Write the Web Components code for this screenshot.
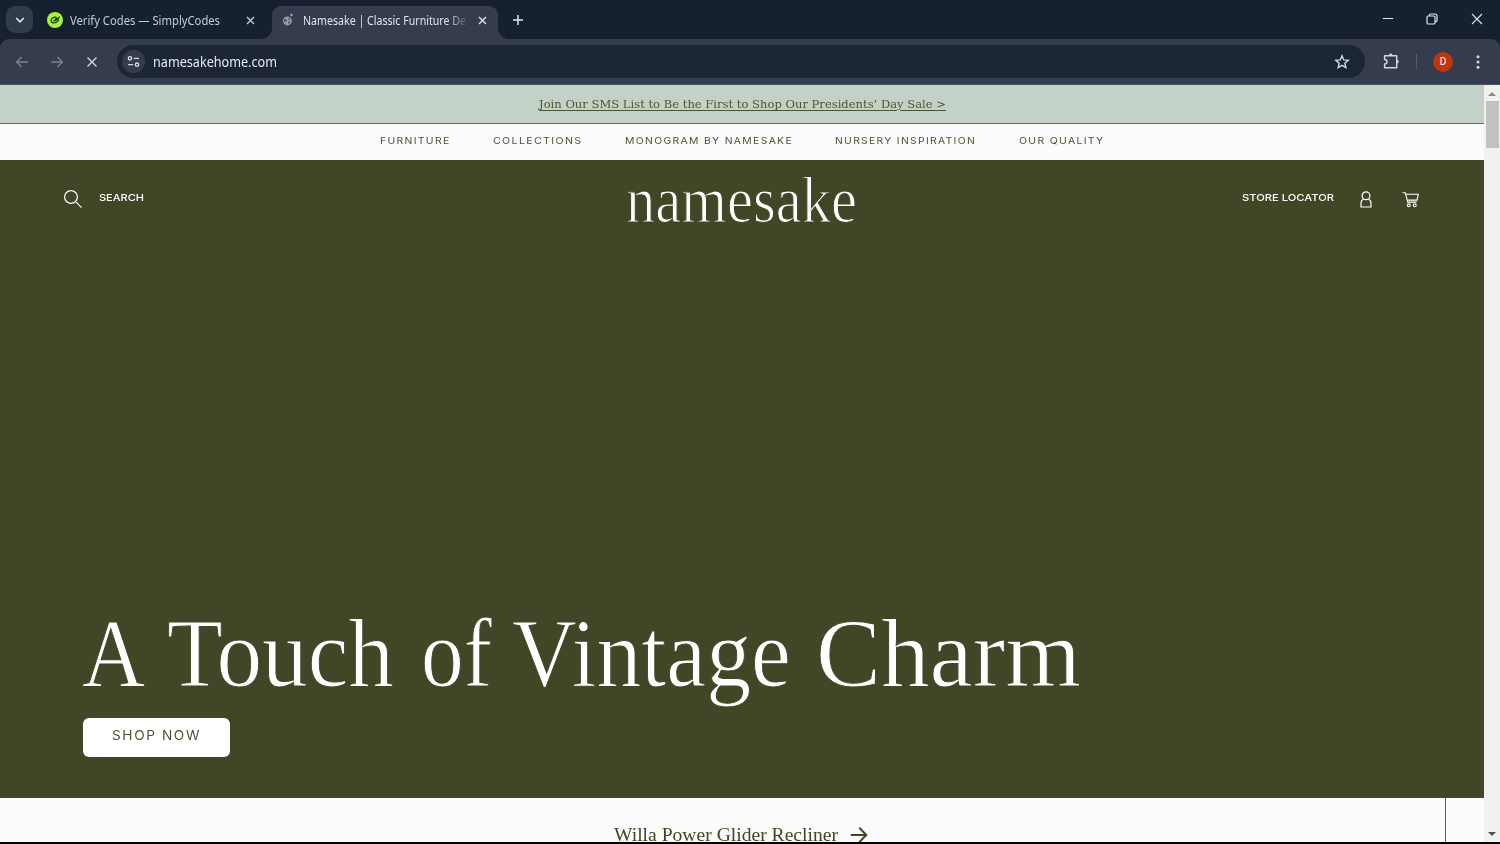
<!DOCTYPE html>
<html lang="en">
<head>
<meta charset="utf-8">
<title>Namesake | Classic Furniture Designs</title>
<style>
    html, body { margin: 0; height: 100%; overflow: hidden; background: #000; }
</style>
</head>
<body>
<browser-window></browser-window>

<script>
(function () {
    "use strict";

    const ICONS = {
        chevron: ['0 0 12 12', '<path d="M2.2 4 6 7.8 9.800 4" stroke-width="1.7"/>'],
        codes: ['0 0 16 16', '<circle cx="8" cy="8" r="8" fill="#a9f23b" stroke="none"/><g stroke="#17301a" stroke-width="1.100"><path d="M9.600 5.200C6.500 4.700 3.900 6.500 4 8.900c.2 2.300 3.500 2.700 5.700 1.100 1.300-.9 1.900-2.200 1.700-3.300"/><path d="M6.300 8.200c.6 1.200 1.900.9 2.800-.1L12.800 4.600M7.700 7.400l2.700-1.500"/></g>'],
        globe: ['0 0 14 14', '<circle cx="6.4" cy="7.9" r="4.500" fill="#949ba5" stroke="none"/><path d="M3.200 6.400c1.200-.3 1.700.6 2.700.5l-.4 1.100-1.200.2-.3 1.100-.8-.6zM7.500 4.800l1.700 1.300-1 .8-1-.7zM7.300 8.800l2-.3-.7 1.600-1.200.9z" fill="#3a4251" stroke="none"/><circle cx="10.500" cy="2" r="1.2" fill="#92a9e8" stroke="none"/>'],
        close: ['0 0 12 12', '<path d="m2.2 2.2 7.6 7.6M9.8 2.2 2.2 9.8" stroke-width="1.5"/>'],
        stop: ['0 0 12 12', '<path d="m1.500 1.500 9 9M10.500 1.500l-9 9" stroke-width="1.400"/>'],
        plus: ['0 0 12 12', '<path d="M6 1v10M1 6h10" stroke-width="1.5"/>'],
        minimize: ['0 0 12 12', '<path d="M.8 5.500h10.400" stroke-width="1"/>'],
        restore: ['0 0 12 12', '<rect x="1" y="3" width="8" height="8" rx="1.3"/><path d="M3.3 3V2.2Q3.3 1 4.5 1h4.3Q11 1 11 3.2v4.3Q11 8.7 9.8 8.7H9"/>'],
        exit: ['0 0 12 12', '<path d="m1 1 10 10M11 1 1 11" stroke-width="1.1"/>'],
        back: ['0 0 14 14', '<path d="M12.8 7H1.7M6.6 2 1.6 7l5 5" stroke-width="1.4"/>'],
        forward: ['0 0 14 14', '<path d="M1.2 7h11.1M7.4 2l5 5-5 5" stroke-width="1.4"/>'],
        tune: ['0 0 14 14', '<g stroke-width="1.500"><circle cx="3.2" cy="3.6" r="1.8"/><path d="M7.3 3.6h5.5M1.2 10.4h5.5"/><circle cx="10.8" cy="10.4" r="1.8"/></g>'],
        star: ['0 0 16 16', '<path d="m8 1.8 1.75 4.1 4.5.4-3.4 2.95 1 4.35L8 11.3l-3.85 2.3 1-4.35-3.4-2.95 4.5-.4z" stroke-width="1.4"/>'],
        puzzle: ['0 0 18 18', '<path d="M2.600 3.700h12.100v12.100H2.600v-3.700c1.500 0 2.400-.9 2.400-2.300S4.100 7.500 2.600 7.500z" stroke-width="1.500" stroke-linejoin="round"/><path d="M7 3.200c0-2.200 3.400-2.200 3.400 0zM15.200 8.100c2.200 0 2.200 3.400 0 3.400z" fill="currentColor" stroke="none"/>'],
        dots: ['0 0 6 16', '<g fill="currentColor" stroke="none"><circle cx="3" cy="2.8" r="1.5"/><circle cx="3" cy="8" r="1.5"/><circle cx="3" cy="13.2" r="1.5"/></g>'],
        search: ['0 0 18 18', '<circle cx="7" cy="7" r="6.4"/><path d="m11.6 11.6 6 6"/>'],
        person: ['0 0 12 17', '<circle cx="6" cy="4.8" r="3.9"/><path d="M3.5 8.3C1.6 9 1 10.300 1 12.200V16h10v-3.800c0-1.900-.6-3.200-2.500-3.900"/>'],
        cart: ['0 0 18 17', '<path d="M.6 1.300h2.900L6 11.300h9.400M4 3h13.200l-1.300 6.200H5.500"/><circle cx="7.200" cy="14.700" r="1.500"/><circle cx="13.500" cy="14.700" r="1.500"/>'],
        arrow: ['0 0 18 18', '<path d="M.8 9H16M9.300 1.800 16.300 9l-7 7.200" stroke-width="2"/>']
    };

    /**
     * Base class: puts the element's markup in an open shadow root.
     */
    class BaseElement extends HTMLElement {
        connectedCallback() {
            if (this.shadowRoot) return;
            this.attachShadow({ mode: 'open' });
            this.shadowRoot.innerHTML = this.template();
        }
    }

    // <ui-icon name="star" w="16" h="16">
    class UiIcon extends BaseElement {
        template() {
            const [viewBox, body] = ICONS[this.getAttribute('name')];
            const w = this.getAttribute('w') || 12;
            const h = this.getAttribute('h') || w;
            return `
                <style>
                    :host { display: block; flex: none; width: ${w}px; height: ${h}px; }
                    svg { display: block; width: 100%; height: 100%; overflow: visible; }
                </style>
                <svg viewBox="${viewBox}" fill="none" stroke="currentColor" stroke-width="1.2">${body}</svg>
            `;
        }
    }

    /**
     * Condenses or expands a single line of text to the width in `w`.
     */
    class FitText extends BaseElement {
        template() {
            return `
                <style>
                    :host { display: inline-block; flex: none; width: ${this.getAttribute('w')}px; white-space: nowrap; text-align: left; }
                    span { display: inline-block; transform-origin: 0 50%; }
                </style>
                <span><slot></slot></span>
            `;
        }

        connectedCallback() {
            super.connectedCallback();
            this.fit();
        }

        fit() {
            const span = this.shadowRoot.querySelector('span');
            span.style.transform = 'none';
            const natural = span.getBoundingClientRect().width;
            if (natural) span.style.transform = `scaleX(${this.getAttribute('w') / natural})`;
        }
    }

    class TabStrip extends BaseElement {
        template() {
            return `
                <style>
                    :host { display: flex; height: 39px; background: #162030; color: #dfe4ee; font-size: 12px; }
                    .menu { width: 27px; height: 27px; margin: 6px 0 0 6px; border-radius: 9px; background: #323b4b; display: grid; place-items: center; }
                    .tab { display: flex; align-items: center; box-sizing: border-box; height: 33px; margin-top: 6px; padding-bottom: 5px; }
                    .idle { width: 239px; padding-left: 14px; color: #c3cad7; }
                    .idle fit-text { margin: 0 25px 0 7px; }
                    .active { position: relative; width: 226px; padding-left: 9px; border-radius: 9px 9px 0 0; background: #343c4d; }
                    .active::before, .active::after { content: ""; position: absolute; bottom: 0; width: 10px; height: 10px; }
                    .active::before { left: -10px; background: radial-gradient(circle at 0 0, transparent 9.5px, #343c4d 10px); }
                    .active::after { right: -10px; background: radial-gradient(circle at 100% 0, transparent 9.5px, #343c4d 10px); }
                    .title { width: 163px; overflow: hidden; margin: 0 11px 0 8px; -webkit-mask-image: linear-gradient(90deg, #000 144px, transparent 166px); mask-image: linear-gradient(90deg, #000 144px, transparent 166px); }
                    .new { margin: 14px auto 0 14px; }
                    .controls { display: flex; gap: 33px; margin: 13px 17px 0 0; }
                    .controls ui-icon:first-child { margin-right: -1px; }
                </style>
                <div class="menu"><ui-icon name="chevron" w="12"></ui-icon></div>
                <div class="tab idle">
                    <ui-icon name="codes" w="16"></ui-icon>
                    <fit-text w="150">Verify Codes — SimplyCodes</fit-text>
                    <ui-icon name="close" w="11"></ui-icon>
                </div>
                <div class="tab active">
                    <ui-icon name="globe" w="14"></ui-icon>
                    <div class="title"><fit-text w="163">Namesake | Classic Furniture De</fit-text></div>
                    <ui-icon name="close" w="11"></ui-icon>
                </div>
                <ui-icon class="new" name="plus" w="12"></ui-icon>
                <div class="controls">
                    <ui-icon name="minimize" w="12"></ui-icon>
                    <ui-icon name="restore" w="12"></ui-icon>
                    <ui-icon name="exit" w="12"></ui-icon>
                </div>
            `;
        }
    }

    class AddressBar extends BaseElement {
        template() {
            return `
                <style>
                    :host { display: block; background: #162030; color: #d2d8e3; }
                    .bar { display: flex; align-items: center; box-sizing: border-box; height: 46px; padding: 0 19px 0 15px; border-radius: 9px 9px 0 0; border-bottom: 1px solid #4a5559; background: #343c4d; }
                    .nav { display: flex; align-items: center; gap: 21px; width: 102px; color: #798292; }
                    .nav ui-icon:last-child { margin-left: 1px; color: #d2d8e3; }
                    .omnibox { display: flex; align-items: center; box-sizing: border-box; width: 1248px; height: 33px; padding: 0 15px 0 5px; border-radius: 17px; background: #1c2533; }
                    .site { display: grid; place-items: center; width: 23px; height: 23px; border-radius: 50%; background: #343c4d; margin-right: 8px; }
                    .omnibox fit-text { margin-right: auto; font-size: 14px; color: #e7ebf2; }
                    .ext { margin: -1px 0 0 17px; }
                    .rule { width: 1px; height: 15px; margin: 0 16px 0 16px; background: #555e6e; }
                    .avatar { width: 20px; height: 20px; border-radius: 50%; background: #bf360c; color: #fff; font: 10px/20px Roboto, sans-serif; text-align: center; margin-right: auto; }
                </style>
                <div class="bar">
                    <div class="nav">
                        <ui-icon name="back" w="14"></ui-icon>
                        <ui-icon name="forward" w="14"></ui-icon>
                        <ui-icon name="stop" w="12"></ui-icon>
                    </div>
                    <div class="omnibox">
                        <div class="site"><ui-icon name="tune" w="13"></ui-icon></div>
                        <fit-text w="124">namesakehome.com</fit-text>
                        <ui-icon name="star" w="16"></ui-icon>
                    </div>
                    <ui-icon class="ext" name="puzzle" w="18"></ui-icon>
                    <div class="rule"></div>
                    <div class="avatar">D</div>
                    <ui-icon name="dots" w="6" h="16"></ui-icon>
                </div>
            `;
        }
    }

    class PromoBanner extends BaseElement {
        template() {
            return `
                <style>
                    :host { display: block; height: 38px; border-bottom: 1px solid #63704f; background: #c3d1c7; text-align: center; font: 11.500px/38px "DejaVu Serif", serif; color: #4b5735; }
                    a { text-decoration: underline; text-underline-offset: 2px; text-decoration-thickness: 1px; }
                </style>
                <fit-text w="407"><a><slot></slot></a></fit-text>
            `;
        }
    }

    class SiteNav extends BaseElement {
        template() {
            return `
                <style>
                    :host { display: flex; justify-content: center; gap: 42.500px; height: 36px; background: #fbfbfb; font: 9.500px/33px Inter, sans-serif; letter-spacing: 1.200px; color: #4d5436; }
                </style>
                <fit-text w="70.5">FURNITURE</fit-text>
                <fit-text w="89.5">COLLECTIONS</fit-text>
                <fit-text w="168">MONOGRAM BY NAMESAKE</fit-text>
                <fit-text w="141">NURSERY INSPIRATION</fit-text>
                <fit-text w="85.5">OUR QUALITY</fit-text>
            `;
        }
    }

    class SiteHeader extends BaseElement {
        template() {
            return `
                <style>
                    :host { display: grid; grid-template-columns: 1fr auto 1fr; align-items: center; height: 78px; padding: 0 65px 0 64px; font: 500 9.500px/12px Inter, sans-serif; }
                    .side { display: flex; align-items: center; margin-top: -1px; }
                    .side fit-text { margin-top: -2px; }
                    .left { gap: 17px; }
                    .right { justify-content: flex-end; }
                    .person { margin: 0 30px 0 26px; }
                    .logo { margin-top: 1px; font: 66px/78px "Liberation Serif", serif; -webkit-text-stroke: 1.200px #404726; }
                </style>
                <div class="side left">
                    <ui-icon name="search" w="18"></ui-icon>
                    <fit-text w="45">SEARCH</fit-text>
                </div>
                <fit-text class="logo" w="231">namesake</fit-text>
                <div class="side right">
                    <fit-text w="92">STORE LOCATOR</fit-text>
                    <ui-icon class="person" name="person" w="12" h="17"></ui-icon>
                    <ui-icon name="cart" w="17" h="17"></ui-icon>
                </div>
            `;
        }
    }

    class HeroPanel extends BaseElement {
        template() {
            return `
                <style>
                    :host { display: flex; flex-direction: column; box-sizing: border-box; height: 638px; background: #404726; color: #fff; }
                    .copy { margin: auto 0 41px 82px; }
                    h1 { display: flex; margin: 0 0 14px; font: 97px/101px "Liberation Serif", serif; -webkit-text-stroke: 1px #404726; }
                    .button { box-sizing: border-box; width: 147px; height: 39px; margin-left: 1px; padding-left: 29px; border-radius: 6px; background: #fff; color: #4d5436; font: 13px/34px Inter, sans-serif; letter-spacing: 1.500px; }
                </style>
                <site-header></site-header>
                <div class="copy">
                    <h1>
                        <fit-text w="63" style="margin-right: 22px">A</fit-text>
                        <fit-text w="227" style="margin-right: 27px">Touch</fit-text>
                        <fit-text w="71" style="margin-right: 20px">of</fit-text>
                        <fit-text w="279" style="margin-right: 25px">Vintage</fit-text>
                        <fit-text w="265">Charm</fit-text>
                    </h1>
                    <div class="button"><fit-text w="89">SHOP NOW</fit-text></div>
                </div>
            `;
        }
    }

    class ProductLink extends BaseElement {
        template() {
            return `
                <style>
                    :host { display: flex; height: 44px; overflow: hidden; background: #fbfbfb; color: #404726; }
                    .link { flex: 1; display: flex; justify-content: center; gap: 12px; padding: 24px 0 0 36px; border-right: 1px solid #5f664a; font: 19.500px/25px "Liberation Serif", serif; }
                    .link ui-icon { margin-top: 4px; }
                    .next { width: 38px; }
                </style>
                <div class="link">
                    <fit-text w="224"><slot></slot></fit-text>
                    <ui-icon name="arrow" w="18"></ui-icon>
                </div>
                <div class="next"></div>
            `;
        }
    }

    class PageScrollbar extends BaseElement {
        template() {
            return `
                <style>
                    :host { display: flex; flex-direction: column; align-items: center; width: 16px; background: #f1f1f1; }
                    .up, .down { border: 4px solid transparent; border-top: 0; border-bottom: 4px solid #8b8b8b; margin: 7px 0 5px; }
                    .thumb { width: 13px; height: 47px; background: #c1c1c1; }
                    .down { margin: auto 0 6px; border-bottom: 0; border-top: 4px solid #505050; }
                </style>
                <div class="up"></div>
                <div class="thumb"></div>
                <div class="down"></div>
            `;
        }
    }

    class BrowserWindow extends BaseElement {
        template() {
            return `
                <style>
                    :host { display: block; width: 1500px; height: 842px; overflow: hidden; font-family: "Noto Sans", sans-serif; }
                    .view { display: flex; height: 757px; }
                    main { width: 1484px; }
                </style>
                <tab-strip></tab-strip>
                <address-bar></address-bar>
                <div class="view">
                    <main>
                        <promo-banner>Join Our SMS List to Be the First to Shop Our Presidents’ Day Sale &gt;</promo-banner>
                        <site-nav></site-nav>
                        <hero-panel></hero-panel>
                        <product-link>Willa Power Glider Recliner</product-link>
                    </main>
                    <page-scrollbar></page-scrollbar>
                </div>
            `;
        }
    }

    customElements.define('ui-icon', UiIcon);
    customElements.define('fit-text', FitText);
    customElements.define('tab-strip', TabStrip);
    customElements.define('address-bar', AddressBar);
    customElements.define('promo-banner', PromoBanner);
    customElements.define('site-nav', SiteNav);
    customElements.define('site-header', SiteHeader);
    customElements.define('hero-panel', HeroPanel);
    customElements.define('product-link', ProductLink);
    customElements.define('page-scrollbar', PageScrollbar);
    customElements.define('browser-window', BrowserWindow);
})();
</script>
</body>
</html>
